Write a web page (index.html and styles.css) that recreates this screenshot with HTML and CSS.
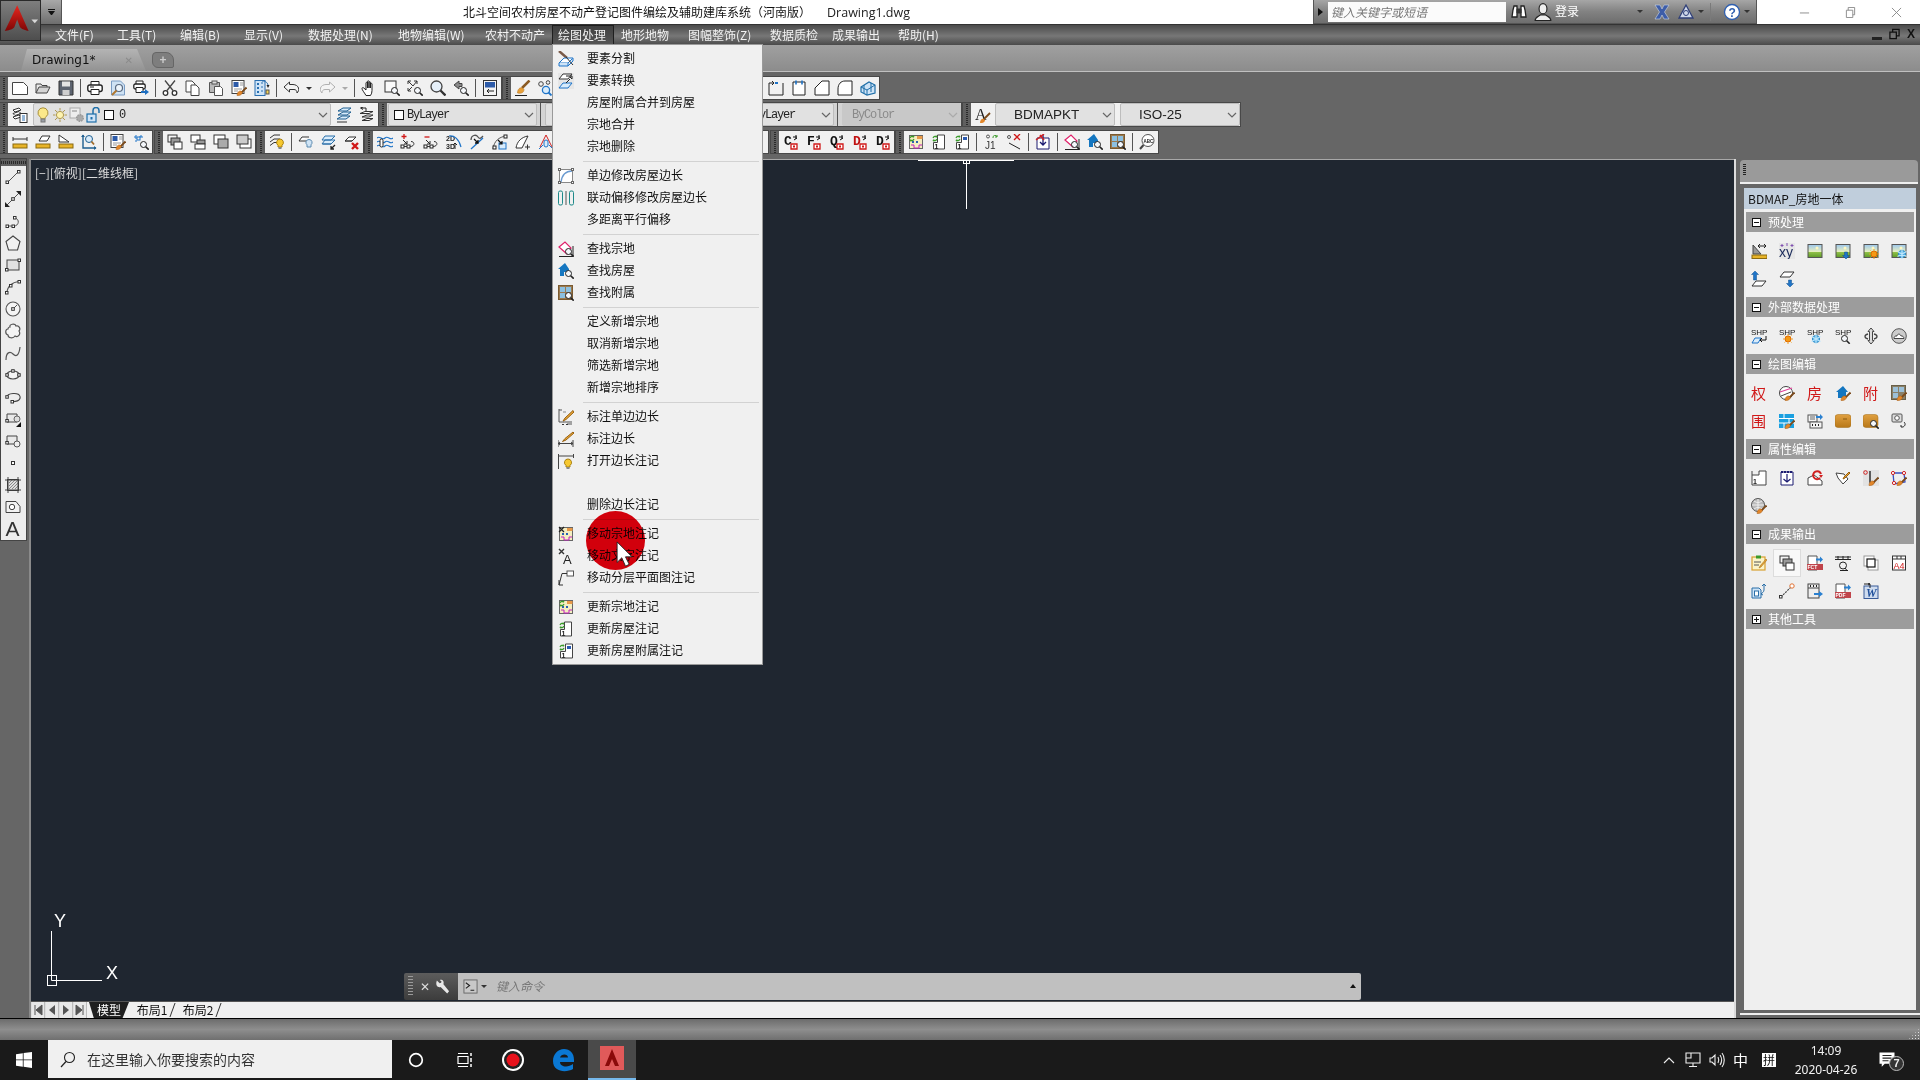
FILE: index.html
```html
<!DOCTYPE html>
<html lang="zh">
<head>
<meta charset="utf-8">
<title>Drawing1.dwg</title>
<link rel="stylesheet" href="styles.css">
</head>
<body>
<svg class="defs" xmlns="http://www.w3.org/2000/svg">
<defs>
<linearGradient id="gRed" x1="0" y1="0" x2="0" y2="1"><stop offset="0" stop-color="#e8281f"/><stop offset="1" stop-color="#7d0606"/></linearGradient>
<linearGradient id="gSky" x1="0" y1="0" x2="0" y2="1"><stop offset="0" stop-color="#9cc7ee"/><stop offset=".55" stop-color="#e8efc0"/><stop offset=".6" stop-color="#8fc048"/><stop offset="1" stop-color="#5f9a28"/></linearGradient>
<linearGradient id="gWal" x1="0" y1="0" x2="0" y2="1"><stop offset="0" stop-color="#e0a040"/><stop offset="1" stop-color="#b87818"/></linearGradient>
<g id="mag"><circle cx="10.5" cy="10.5" r="3" fill="#f4f7fb" stroke="#222"/><path d="M12.7 12.7l3 3" stroke="#222" stroke-width="1.6"/></g>
<g id="brush"><path d="M15.5 7.5l-5 5" stroke="#7a4a1c" stroke-width="1.8"/><path d="M6 15.5c0-3 2-5 4-4.500l1.300 1.300c0 2-2 3.700-5.300 3.200z" fill="#e2862a" stroke="#a85f14" stroke-width=".5"/></g>
<g id="pic"><rect x="1" y="1.500" width="14" height="13" fill="url(#gSky)" stroke="#555"/><circle cx="10" cy="5" r="1.500" fill="#fff7c0" stroke="none"/></g>
<g id="sun"><circle cx="11" cy="11" r="3" fill="#f59a14" stroke="#e06a00"/><path d="M11 6v1.500M11 14.500V16M6 11h1.500M14.500 11H16M7.500 7.500l1 1M14.500 7.500l-1 1M7.500 14.500l1-1M14.500 14.500l-1-1" stroke="#f0a020"/></g>
<g id="snow"><circle cx="11" cy="11" r="3.600" fill="#58b4e8" stroke="#2f8cc8"/><path d="M11 6v10M6.500 8.500l9 5M15.500 8.500l-9 5" stroke="#bfe6fb" stroke-width="1.200"/></g>
<g id="darrow"><path d="M9.500 9h3v3.500h2L11 16l-3.500-3.500h2z" fill="#1f74c8" stroke="#10508f" stroke-width=".5"/></g>
<g id="rarrow"><path d="M9 3.500h4V1.500l3 3-3 3v-2H9z" fill="#2a80d0" stroke="none"/></g>
<g id="garrows"><path d="M2 4a2.500 2.500 0 0 1 4-1M6 5a2.500 2.500 0 0 1-4 1" stroke="#3a9a2a" stroke-width="1.200"/><path d="M5 1l1.500 2-2 .5zM3 8L1.500 6l2-.5z" fill="#3a9a2a" stroke="none"/></g>
<g id="map"><rect x="1.500" y="1.500" width="13" height="13" fill="#f5eec0" stroke="#666"/><path d="M9 2h5.500v3H9z" fill="#e89a4a" stroke="none"/><path d="M3 11h3v3h5v-3h3" stroke="#c020c0"/><rect x="4" y="7" width="2" height="2" fill="#2a60b0" stroke="none"/><rect x="8" y="7" width="2" height="2" fill="#2a60b0" stroke="none"/></g>

<symbol id="new" viewBox="0 0 16 16"><path d="M.5 2.500h11l4 4v8H.5z" fill="#fff" stroke="#444"/></symbol>
<symbol id="open" viewBox="0 0 16 16"><path d="M1 13V4h5l1 1.500h5V7" fill="#e8e8e8" stroke="#444"/><path d="M1 13l3-6h11l-3 6z" fill="#d4d4d4" stroke="#444"/></symbol>
<symbol id="save" viewBox="0 0 16 16"><path d="M1 1h14v14H1z" fill="#5d6470" stroke="#333"/><rect x="4" y="1.500" width="8" height="5" fill="#e4e4e4" stroke="none"/><rect x="4.500" y="10" width="7" height="5" fill="#cfcfcf" stroke="none"/></symbol>
<symbol id="print" viewBox="0 0 16 16"><path d="M4 5V1.500h8V5" fill="#fff" stroke="#222"/><rect x=".8" y="5" width="14.400" height="6.500" rx="2" fill="#fff" stroke="#222" stroke-width="1.400"/><path d="M4 9.500h8v5H4z" fill="#fff" stroke="#222"/><path d="M3 7h4" stroke="#222"/></symbol>
<symbol id="preview" viewBox="0 0 16 16"><path d="M1.500 1h9l4 4v10h-13z" fill="#cfe2f3" stroke="#7a9cc4"/><circle cx="9" cy="8" r="3.500" fill="#eef5fb" stroke="#5a6a80" stroke-width="1.200"/><path d="M6.500 10.500L2 15" stroke="#b07830" stroke-width="2"/></symbol>
<symbol id="plot" viewBox="0 0 16 16"><path d="M3 4V1h7v3" fill="#fff" stroke="#222"/><rect x=".8" y="4" width="11.400" height="5" rx="1.500" fill="#fff" stroke="#222" stroke-width="1.300"/><path d="M3 7.500h7v5H3z" fill="#fff" stroke="#222"/><path d="M8 11h4V9l4 3-4 3v-2H8z" fill="#1f6fc0" stroke="none"/></symbol>
<symbol id="cut" viewBox="0 0 16 16"><path d="M3 .5l8 10M13 .5l-8 10" stroke="#444" stroke-width="1.300"/><circle cx="3.500" cy="13" r="2.300" fill="#fff" stroke="#333" stroke-width="1.300"/><circle cx="12.500" cy="13" r="2.300" fill="#fff" stroke="#333" stroke-width="1.300"/></symbol>
<symbol id="copy" viewBox="0 0 16 16"><path d="M1 1h6l3 3v8H1z" fill="#fff" stroke="#444"/><path d="M6 5h5l3 3v7.500H6z" fill="#fff" stroke="#444"/></symbol>
<symbol id="paste" viewBox="0 0 16 16"><path d="M1.500 2.500h10v10h-10z" fill="#b8b8b8" stroke="#555"/><rect x="4" y="1" width="5" height="3" fill="#ddd" stroke="#555"/><path d="M6.500 6.500h6l2 2v7h-8z" fill="#fff" stroke="#555"/></symbol>
<symbol id="match" viewBox="0 0 16 16"><rect x="1" y=".5" width="12" height="13" fill="#fff" stroke="#444"/><rect x="2.500" y="2" width="5" height="5" fill="#2c5aa8" stroke="none"/><path d="M9 3h3M9 5h3M3 9h8M3 11h4" stroke="#999"/><use href="#brush"/></symbol>
<symbol id="props" viewBox="0 0 16 16"><rect x="1" y=".5" width="10" height="15" fill="#cfe4f7" stroke="#2a6fb0"/><path d="M3 3h2v2H3zM3 7h2v2H3zM3 11h2v2H3z" fill="#2a6fb0" stroke="none"/><path d="M7 3h2M7 7h2M7 11h2" stroke="#2a6fb0"/><path d="M8 1c4 0 6 2 6 5" stroke="#2a6fb0"/><path d="M12.500 5h3L14 8z" fill="#222" stroke="none"/><rect x="12" y="10" width="3" height="4" fill="#f3d050" stroke="#555"/></symbol>
<symbol id="undo" viewBox="0 0 16 16"><path d="M6.500 2L1 7l5.500 5V9.500H11a3 3 0 0 1 3 3.500c1.500-1.500 2-3 1.500-5S12.500 4.500 10 4.500H6.500z" fill="#f4f4f4" stroke="#333"/></symbol>
<symbol id="redo" viewBox="0 0 16 16"><path d="M9.500 2l5.500 5-5.500 5V9.500H5A3 3 0 0 0 2 13C.5 11.500 0 10 .5 8S3.500 4.500 6 4.500h3.500z" fill="#f4f4f4" stroke="#b0b0b0"/></symbol>
<symbol id="pan" viewBox="0 0 16 16"><path d="M5 15.500C3 12 1 10 1 8.500c0-1 1.200-1.200 2-.3L5 10V3c0-1 1.500-1 1.500 0v5-6.500c0-1 1.500-1 1.500 0V8 2.500c0-1 1.500-1 1.500 0V8 4c0-1 1.500-1 1.500 0v6.500c0 2-.5 3.500-1.500 5z" fill="#fff" stroke="#222"/></symbol>
<symbol id="zwin" viewBox="0 0 16 16"><rect x="1" y="1" width="11" height="11" fill="#fafafa" stroke="#333"/><use href="#mag"/></symbol>
<symbol id="zext" viewBox="0 0 16 16"><path d="M1 1l3 0M1 1v3M1 1l5 5M10 1h-3M10 1v3M10 1L6 6M1 11V8M1 11h3M1 11l4-4" stroke="#333"/><use href="#mag"/></symbol>
<symbol id="zrt" viewBox="0 0 16 16"><circle cx="6.500" cy="6.500" r="5.500" fill="#e6f0fa" stroke="#444" stroke-width="1.300"/><path d="M10.500 10.500l5 5" stroke="#333" stroke-width="2.300"/></symbol>
<symbol id="zprev" viewBox="0 0 16 16"><path d="M1 5l5-4v2.500h3v3H6V9z" fill="#8a8a8a" stroke="#444"/><use href="#mag"/></symbol>
<symbol id="palw" viewBox="0 0 16 16"><rect x="1.500" y=".5" width="13" height="15" fill="#f4f4f4" stroke="#333"/><rect x="3" y="2" width="10" height="5.500" fill="#2c5aa8" stroke="none"/><path d="M5 11h7M5 11l2-2M5 11l2 2" stroke="#222"/></symbol>
<symbol id="brl" viewBox="0 0 16 16"><path d="M14.500.5L7 8" stroke="#8a5a22" stroke-width="2.500"/><path d="M2.500 13c0-4 2.500-6 5-5l1.500 1.500c0 3-3 4.500-6.500 3.500z" fill="#e8a038" stroke="#b06a14" stroke-width=".5"/><path d="M0 15.500h12" stroke="#222"/></symbol>
<symbol id="cir" viewBox="0 0 16 16"><circle cx="3" cy="4" r="2.300" stroke="#444"/><circle cx="10" cy="2.500" r="1.800" stroke="#444"/><circle cx="8" cy="10" r="3.600" fill="#d9ecfb" stroke="#1f74c8" stroke-width="1.300"/><path d="M10.500 12.500l3 3" stroke="#1f74c8" stroke-width="1.800"/></symbol>
<symbol id="layer" viewBox="0 0 16 16"><path d="M1 3l6-2 2 2-6 2zM1 6.500l6-2 2 2-6 2zM1 10l6-2 2 2-6 2z" fill="#fff" stroke="#333"/><rect x="8" y="6.500" width="7" height="9" fill="#fff" stroke="#333"/><path d="M10 9h3M10 11h3M10 13h3" stroke="#2a6fb0"/></symbol>
<symbol id="bulb" viewBox="0 0 16 16"><path d="M8 .8a5 5 0 0 1 3 9c-.6.500-1 1-1 2H6c0-1-.4-1.500-1-2a5 5 0 0 1 3-9z" fill="#fbe88a" stroke="#a8903c"/><rect x="6" y="12" width="4" height="3" fill="#9aa0a8" stroke="#777"/></symbol>
<symbol id="sunl" viewBox="0 0 16 16"><circle cx="8" cy="8" r="3.600" fill="#fdf3b0" stroke="#b09a50"/><path d="M8 1v2.500M8 12.500V15M1 8h2.500M12.500 8H15M3 3l2 2M13 3l-2 2M3 13l2-2M13 13l-2-2" stroke="#b09a50"/></symbol>
<symbol id="gear" viewBox="0 0 16 16"><rect x="1" y="1" width="10" height="10" fill="#eee" stroke="#aaa"/><path d="M3 3h5v2H3z" fill="#bbb" stroke="none"/><circle cx="11" cy="11" r="3.300" fill="#aaa" stroke="#999" stroke-width="1.500" stroke-dasharray="1.500 1"/></symbol>
<symbol id="lock" viewBox="0 0 16 16"><rect x="1" y="7" width="9" height="8" fill="#cfe4f7" stroke="#1f6fa8" stroke-width="1.200"/><path d="M7 7V3.500a3 3 0 0 1 6 0V6" stroke="#1f6fa8" stroke-width="1.500"/><rect x="4.500" y="10" width="2" height="2.500" fill="#1f6fa8" stroke="none"/></symbol>
<symbol id="lstack" viewBox="0 0 16 16"><path d="M2 4l5-3h8l-4 3zM2 8l5-3h8l-4 3zM1 12l5-3h8l-4 3z" fill="#d9ecfb" stroke="#1f5f90"/><path d="M1 15h10" stroke="#333"/></symbol>
<symbol id="lprev" viewBox="0 0 16 16"><path d="M1 6.500l5-2h8l-4 2zM3 10l5-2h6l-4 2zM3 13.500l5-2h6l-4 2z" fill="#fff" stroke="#333"/><path d="M7 4V1H2M4 0L1.500 1 4 2.500" stroke="#222"/></symbol>
<symbol id="afont" viewBox="0 0 16 16"><text x="0" y="13" class="it it-a">A</text><path d="M15 6l-6 6" stroke="#7a4a1c" stroke-width="1.800"/><path d="M5 16c0-3 2-5 4-4l1 1c0 2-2 3.500-5 3z" fill="#e2862a" stroke="none"/></symbol>
<symbol id="d1" viewBox="0 0 16 16"><path d="M1 5h14M1 3v4M15 3v4" stroke="#333"/><rect x="1" y="10" width="14" height="4" fill="#e8b428" stroke="#8a6a10"/></symbol>
<symbol id="d2" viewBox="0 0 16 16"><path d="M4 7l3-5h8l-3 5z" fill="#fff" stroke="#333"/><rect x="1" y="10" width="14" height="4" fill="#e8b428" stroke="#8a6a10"/></symbol>
<symbol id="d3" viewBox="0 0 16 16"><path d="M1 8V1l10 7z" fill="#fff" stroke="#333"/><rect x="1" y="10" width="14" height="4" fill="#e8b428" stroke="#8a6a10"/></symbol>
<symbol id="ucsm" viewBox="0 0 16 16"><path d="M2 1v13h13" stroke="#1f5f90" stroke-width="1.400"/><path d="M0 3l2-2.500L4 3zM13 12l2.500 2-2.500 2z" fill="#1f5f90" stroke="none"/><circle cx="8" cy="5" r="3.500" fill="#d9ecfb" stroke="#1f5f90"/><path d="M10.500 7.500l2.500 3" stroke="#a06a28" stroke-width="1.800"/></symbol>
<symbol id="zobj" viewBox="0 0 16 16"><path d="M1 3h2M3 1v4M8 1v2M6 3h4M3 8V6" stroke="#1f74c8"/><rect x="4" y="3" width="3" height="3" fill="#eee" stroke="#1f74c8"/><use href="#mag"/></symbol>
<symbol id="ord1" viewBox="0 0 16 16"><rect x="1" y="1" width="9" height="7" fill="#f4f4f4" stroke="#333"/><rect x="4" y="4" width="9" height="7" fill="#999" stroke="#333"/><rect x="7" y="8" width="8" height="7" fill="#fff" stroke="#333"/></symbol>
<symbol id="ord2" viewBox="0 0 16 16"><rect x="1" y="1" width="9" height="7" fill="#fff" stroke="#333"/><rect x="7" y="6" width="8" height="4" fill="#999" stroke="#333"/><rect x="5" y="10" width="10" height="5" fill="#fff" stroke="#333"/></symbol>
<symbol id="ord3" viewBox="0 0 16 16"><rect x="1" y="1" width="11" height="9" fill="#fff" stroke="#333"/><rect x="5" y="5" width="10" height="9" fill="#aaa" stroke="#333"/></symbol>
<symbol id="ord4" viewBox="0 0 16 16"><rect x="4" y="5" width="11" height="9" fill="#fff" stroke="#333"/><rect x="1" y="1" width="11" height="9" fill="#ccc" stroke="#333"/></symbol>
<symbol id="lbulb" viewBox="0 0 16 16"><path d="M1 4l4-3h6M1 8l4-3h6M1 11.500l4-3h4" stroke="#333"/><path d="M11 5a3.500 3.500 0 0 1 2 6.300V13h-4v-1.700A3.500 3.500 0 0 1 11 5z" fill="#f6c830" stroke="#a88010"/><rect x="9.500" y="13" width="3" height="2" fill="#888" stroke="none"/></symbol>
<symbol id="loff" viewBox="0 0 16 16"><path d="M1 7l3-4h7" fill="#fff" stroke="#333"/><path d="M1 7h8" stroke="#333"/><path d="M11 5.500a3 3 0 0 1 2 5.300V13h-4v-2.200a3 3 0 0 1 2-5.300z" fill="#d0e4f5" stroke="#5a8ab0"/></symbol>
<symbol id="lmove" viewBox="0 0 16 16"><path d="M4 2l10 0-4 4H1zM4 6l10 0-4 4H1z" fill="#d9ecfb" stroke="#2a6fa8"/><path d="M2 10h8" stroke="#2a6fa8"/><path d="M14 11l-4 4M10 12v3h3" stroke="#222" stroke-width="1.300"/></symbol>
<symbol id="ldel" viewBox="0 0 16 16"><path d="M1 7l4-4h7l-4 4zM1 7h7" fill="#fff" stroke="#333"/><path d="M8 9l6 6M14 9l-6 6" stroke="#d01818" stroke-width="2.400"/></symbol>
<symbol id="wav" viewBox="0 0 16 16"><path d="M0 4c3-3 5 3 8 0s5 3 8 0M0 8c3-3 5 3 8 0s5 3 8 0M0 12c3-3 5 3 8 0s5 3 8 0" stroke="#1f74c8" stroke-width="1.200"/><rect x="3" y="5" width="3" height="8" rx="1.500" fill="#fff" stroke="#222"/></symbol>
<symbol id="vadd" viewBox="0 0 16 16"><path d="M4 0v5M1.500 2.500h5" stroke="#d01818" stroke-width="1.300"/><rect x="1" y="11" width="3" height="3" fill="#fff" stroke="#222"/><rect x="7" y="11" width="3" height="3" fill="#fff" stroke="#222"/><path d="M4 12.500h3M10 12.500c5 0 5-5 1-5" stroke="#333"/><path d="M3 6l4 4M7 7v3H4" stroke="#222"/></symbol>
<symbol id="vdel" viewBox="0 0 16 16"><path d="M1.500 3h5" stroke="#d01818" stroke-width="1.300"/><rect x="1" y="11" width="3" height="3" fill="#fff" stroke="#222"/><rect x="7" y="11" width="3" height="3" fill="#fff" stroke="#222"/><path d="M4 12.500h3M10 12.500c5 0 5-5 1-5" stroke="#333"/><path d="M3 6l4 4M7 7v3H4" stroke="#222"/></symbol>
<symbol id="d23" viewBox="0 0 16 16"><text x="0" y="7" class="it">2D</text><text x="0" y="15" class="it">3D</text><path d="M3 2c5-1 10 3 12 11" stroke="#1f74c8" stroke-width="1.200"/><path d="M9 15v-5M7 11l2-2 2 2" stroke="#222"/></symbol>
<symbol id="vedit" viewBox="0 0 16 16"><path d="M2 6c0-5 5-6 7-3s4 0 5-1" stroke="#555" stroke-width="1.300"/><path d="M2 15L14 4" stroke="#1f74c8" stroke-width="1.300"/><path d="M5 5l4 4M9 6v3H6" stroke="#111" stroke-width="1.300"/></symbol>
<symbol id="vadj" viewBox="0 0 16 16"><path d="M1 15C2 7 7 3 14 2" stroke="#555"/><rect x="12" y="1" width="3" height="3" fill="#fff" stroke="#222"/><rect x="1" y="12" width="3" height="3" fill="#fff" stroke="#222"/><rect x="7" y="9" width="7" height="6" fill="#d9ecfb" stroke="#1f74c8"/><path d="M6 6l4 4M10 7v3H7" stroke="#111" stroke-width="1.200"/></symbol>
<symbol id="varc" viewBox="0 0 16 16"><path d="M1 14C2 7 7 3 13 2l-6 12z" fill="#fff" stroke="#333"/><path d="M10 13h5M12.500 10.500v5" stroke="#333"/></symbol>
<symbol id="com" viewBox="0 0 16 16"><path d="M8 1L2 13M8 1l6 12" stroke="#d02020"/><rect x="6" y="6" width="4" height="7" rx="2" fill="#d9ecfb" stroke="#1f74c8"/><path d="M1 15l4-4M15 15l-4-4" stroke="#1f74c8"/></symbol>
<symbol id="cd" viewBox="0 0 16 16"><path d="M8 10h6v5H8z" fill="#fff" stroke="#d01818" stroke-width="1.300"/><rect x="10" y="11.500" width="2" height="2" fill="#d01818" stroke="none"/><path d="M10 3h4M13 1v4" stroke="#111"/><path d="M11 6l3-2" stroke="#111"/></symbol>
<symbol id="tC" viewBox="0 0 16 16"><text x="1" y="11" class="it it-b">C</text><use href="#cd"/></symbol>
<symbol id="tF" viewBox="0 0 16 16"><text x="1" y="11" class="it it-b">F</text><use href="#cd"/></symbol>
<symbol id="tQ" viewBox="0 0 16 16"><text x="1" y="11" class="it it-b">Q</text><use href="#cd"/></symbol>
<symbol id="tD" viewBox="0 0 16 16"><text x="1" y="11" class="it it-b it-r">D</text><use href="#cd"/></symbol>
<symbol id="tD2" viewBox="0 0 16 16"><text x="1" y="11" class="it it-b">D</text><use href="#cd"/></symbol>
<symbol id="n1" viewBox="0 0 16 16"><use href="#map"/><use href="#garrows"/></symbol>
<symbol id="n2" viewBox="0 0 16 16"><path d="M2.500 8.500h4V1h7v14h-11z" fill="#fff" stroke="#444"/><text x="3.500" y="14.500" class="it">1</text><use href="#garrows"/></symbol>
<symbol id="n3" viewBox="0 0 16 16"><path d="M2.500 8.500h5V1h7v14h-12z" fill="#fff" stroke="#444"/><rect x="9" y="3" width="4" height="3" fill="#2a5ab0" stroke="none"/><text x="3.500" y="14.500" class="it">1</text><use href="#garrows"/></symbol>
<symbol id="j1" viewBox="0 0 16 16"><circle cx="5" cy="2.500" r="1.500" stroke="#555"/><path d="M10 4a2 2 0 0 1 4-1M14 1v2h-2" stroke="#3a9a2a"/><text x="2" y="15" class="it it-c">J1</text></symbol>
<symbol id="xl" viewBox="0 0 16 16"><circle cx="3" cy="3" r="1.500" stroke="#555"/><path d="M8 0l6 6M14 0L8 6" stroke="#d01818" stroke-width="1.300"/><path d="M3 9l11 6" stroke="#222"/></symbol>
<symbol id="insr" viewBox="0 0 16 16"><path d="M2 4h12v11H2z" fill="#fff" stroke="#1a1a70"/><path d="M8 1v10M5 8l3 3 3-3" stroke="#1a1a70" stroke-width="1.300"/><path d="M1 6L9 0M9 6L5 1" stroke="#d02020" stroke-width="1.500"/></symbol>
<symbol id="fz" viewBox="0 0 16 16"><path d="M1 6l6-5 6 6-4 6z" fill="#fff" stroke="#e0206a" stroke-width="1.200"/><path d="M1 15.500h14M15 5v10" stroke="#222"/><use href="#mag"/></symbol>
<symbol id="fh" viewBox="0 0 16 16"><path d="M7 0L0 6h2v7h4V9h3l2-1V6z" fill="#1476c0" stroke="none"/><use href="#mag"/></symbol>
<symbol id="ff" viewBox="0 0 16 16"><rect x=".5" y=".5" width="14" height="14" fill="#9a7a50" stroke="#7a5a30"/><path d="M2 2h5v5H2zM8 2h5v5H8zM2 8h5v5H2z" fill="#8cc0e0" stroke="none"/><use href="#mag"/></symbol>
<symbol id="abc" viewBox="0 0 16 16"><circle cx="9" cy="6.500" r="6" fill="#fff" stroke="#555"/><text x="4.500" y="8.500" class="it it-s">ABC</text><path d="M4.500 11L1 15" stroke="#444" stroke-width="2"/></symbol>
<symbol id="r1" viewBox="0 0 16 16"><path d="M1 3v12h14V3" stroke="#222"/><path d="M1 3h5M4 1l2 2-2 2" stroke="#222"/><rect x="7" y="2" width="3" height="2" fill="#1f74c8" stroke="none"/></symbol>
<symbol id="r2" viewBox="0 0 16 16"><path d="M2 2h12v13H2z" fill="#fff" stroke="#222"/><path d="M5 .5v4M11 .5v4" stroke="#1f74c8" stroke-width="1.600"/></symbol>
<symbol id="r3" viewBox="0 0 16 16"><path d="M1 15V8l7-7h7v14z" fill="#fff" stroke="#222"/></symbol>
<symbol id="r4" viewBox="0 0 16 16"><path d="M1 15V9c0-5 3-8 7-8h7v14z" fill="#fff" stroke="#222"/></symbol>
<symbol id="r5" viewBox="0 0 16 16"><path d="M1 7l8-5 6 3v8l-8 2-6-3z" fill="#cfe4f7" stroke="#1f6fa8" stroke-width="1.200"/><path d="M1 7l6 3v5M7 10l8-5M4 5v8M11 3v9" stroke="#1f6fa8"/></symbol>

<symbol id="m1" viewBox="0 0 16 16"><path d="M1 0l8 7" stroke="#7a5a48" stroke-width="2.400"/><path d="M1 12l5-5h9l-5 5z" fill="#fff" stroke="#1f74c8"/><path d="M1 12v3h9v-3M10 15l5-5V7" fill="#cfe4f7" stroke="#1f74c8"/><path d="M8 6l7 8" stroke="#333"/></symbol>
<symbol id="m2" viewBox="0 0 16 16"><rect width="16" height="16" fill="#e6e6e6" stroke="none"/><path d="M1 6l4-5h9l-4 5z" fill="#fff" stroke="#333"/><path d="M1 15l4-5h9l-4 5z" fill="#d9ecfb" stroke="#1f74c8"/><path d="M8 3h6v3M14 6l-2-2M8 10l4-4" stroke="#222"/></symbol>
<symbol id="m3" viewBox="0 0 16 16"><rect x="1.500" y="1.500" width="13" height="13" fill="#fff" stroke="#888"/><path d="M14 3c-7 0-10 4-11 11" stroke="#6a9ad0" stroke-width="1.400"/><rect x=".5" y=".5" width="2" height="2" fill="#fff" stroke="#666"/><rect x="13.500" y=".5" width="2" height="2" fill="#fff" stroke="#666"/><rect x=".5" y="13.500" width="2" height="2" fill="#fff" stroke="#666"/><rect x="13.500" y="13.500" width="2" height="2" fill="#fff" stroke="#666"/></symbol>
<symbol id="m4" viewBox="0 0 16 16"><rect x=".5" y="1" width="4" height="14" rx="1.500" stroke="#1f8a8a"/><rect x="11.500" y="1" width="4" height="14" rx="1.500" stroke="#1f8a8a"/><path d="M8 1v14" stroke="#555"/></symbol>
<symbol id="m8" viewBox="0 0 16 16"><path d="M1 0v13h13M1 1h3M9 15h5" stroke="#555"/><path d="M5 3h3M5 13h1" stroke="#888"/><path d="M15 1.500L7 9l-2 3 3-1.500 8-7.500z" fill="#e8a838" stroke="#996010"/><path d="M4 15.500h2M8 15.500h2" stroke="#333"/></symbol>
<symbol id="m9" viewBox="0 0 16 16"><path d="M0 9v7M15 9v7M0 12.500h15" stroke="#444"/><path d="M15 1L7 7.500l-2.500 3 3.500-1.500 8-7z" fill="#e8a838" stroke="#996010"/><path d="M2 11l-2 1.500L2 14M13 11l2 1.500L13 14" stroke="#444"/></symbol>
<symbol id="m10" viewBox="0 0 16 16"><path d="M.5 1v15M15.500 1v4M.5 3h15" stroke="#444"/><path d="M10 6a3.500 3.500 0 0 1 2 6.400V14H8v-1.600A3.500 3.500 0 0 1 10 6z" fill="#f6c830" stroke="#a88010"/><rect x="8.500" y="14" width="3" height="2" fill="#888" stroke="none"/></symbol>
<symbol id="m11" viewBox="0 0 16 16"><use href="#map"/><path d="M1 1l5 5M6 1L1 6" stroke="#222" stroke-width="1.200"/></symbol>
<symbol id="m12" viewBox="0 0 16 16"><path d="M1 1l5 5M6 1L1 6" stroke="#333" stroke-width="1.400"/><text x="5" y="16" class="it it-l">A</text></symbol>
<symbol id="m13" viewBox="0 0 16 16"><rect x="9" y="1" width="6.500" height="5" fill="#fff" stroke="#555"/><path d="M9 3.500H4L1 15" stroke="#333"/><path d="M1 10v5h4" stroke="#333"/></symbol>

<symbol id="l1" viewBox="0 0 16 16"><path d="M3 13L13 3" stroke="#555"/><rect class="h" x="1" y="12" width="2.500" height="2.500"/><rect class="h" x="12.500" y="1.500" width="2.500" height="2.500"/></symbol>
<symbol id="l2" viewBox="0 0 16 16"><path d="M2 14L14 2" stroke="#555"/><path d="M0 16v-5l5 5zM16 0v5l-5-5z" fill="#222" stroke="none"/><rect class="h" x="6.700" y="6.700" width="2.600" height="2.600"/></symbol>
<symbol id="l3" viewBox="0 0 16 16"><path d="M2 13h7c5 0 6-7 1-8" stroke="#555"/><rect class="h" x="1" y="12" width="2.500" height="2.500"/><rect class="h" x="7" y="12" width="2.500" height="2.500"/><rect class="h" x="8.500" y="3.500" width="2.500" height="2.500"/></symbol>
<symbol id="l4" viewBox="0 0 16 16"><path d="M8 1l7 5.500L12.500 15h-9L1 6.500z" fill="#f2f2f2" stroke="#444" stroke-width="1.100"/></symbol>
<symbol id="l5" viewBox="0 0 16 16"><rect x="2" y="3" width="12" height="10" fill="#e2e2e2" stroke="#444"/><rect class="h" x=".5" y="11.500" width="2.500" height="2.500"/><rect class="h" x="13" y="2" width="2.500" height="2.500"/></symbol>
<symbol id="l6" viewBox="0 0 16 16"><path d="M2 14C2 8 7 3 14 2.500" stroke="#555" stroke-width="1.200"/><rect class="h" x=".5" y="12.500" width="2.500" height="2.500"/><rect class="h" x="4.500" y="5.500" width="2.500" height="2.500"/><rect class="h" x="13" y="1.500" width="2.500" height="2.500"/></symbol>
<symbol id="l7" viewBox="0 0 16 16"><circle cx="8" cy="8" r="7" fill="#f4f4f4" stroke="#555" stroke-width="1.100"/><path d="M8 8l4-4" stroke="#555"/><rect class="h" x="6.700" y="6.700" width="2.600" height="2.600"/></symbol>
<symbol id="l8" viewBox="0 0 16 16"><path d="M5 4c-1-3 5-4 6-1 3-1 5 3 3 5 2 3-1 7-4 5-2 3-7 2-7-1-3-1-3-6 0-6 0-1 1-2 2-2z" fill="#f4f4f4" stroke="#555" stroke-width="1.200"/></symbol>
<symbol id="l9" viewBox="0 0 16 16"><path d="M1 15C1 7 5 6 8 9s6 2 7-7" stroke="#555" stroke-width="1.200"/></symbol>
<symbol id="l10" viewBox="0 0 16 16"><ellipse cx="8" cy="8" rx="6.500" ry="4" fill="#f4f4f4" stroke="#444" stroke-width="1.100"/><rect class="h" x=".8" y="6.700" width="2.500" height="2.500"/><rect class="h" x="12.700" y="6.700" width="2.500" height="2.500"/><rect class="h" x="6.700" y="2.700" width="2.500" height="2.500"/></symbol>
<symbol id="l11" viewBox="0 0 16 16"><path d="M2 8c0-4 12-5 13-.5S10 13 6 12.500" stroke="#444" stroke-width="1.100"/><rect class="h" x=".8" y="6.700" width="2.500" height="2.500"/><rect class="h" x="6" y="11.500" width="2.500" height="2.500"/></symbol>
<symbol id="l12" viewBox="0 0 16 16"><path d="M2 3h10v8H2z" fill="#e8e8e8" stroke="#444"/><circle cx="12" cy="8" r="3" fill="#ddd" stroke="#666"/><rect class="h" x=".8" y="8.500" width="2.500" height="2.500"/><path d="M16 11v5h-5z" fill="#111" stroke="none"/></symbol>
<symbol id="l13" viewBox="0 0 16 16"><path d="M2 3h10v8H2z" fill="#e8e8e8" stroke="#444"/><circle cx="12" cy="11" r="3" fill="#eee" stroke="#555"/><rect class="h" x=".8" y="8.500" width="2.500" height="2.500"/></symbol>
<symbol id="l14" viewBox="0 0 16 16"><rect x="6.500" y="6.500" width="3" height="3" fill="#fff" stroke="#333"/></symbol>
<symbol id="l15" viewBox="0 0 16 16"><rect x="2.500" y="2.500" width="11" height="11" fill="#ddd" stroke="#333"/><path d="M4 6l3-3M4 9l6-6M4 12l9-9M7 12l6-6M10 12l3-3" stroke="#888"/><path d="M0 3h16M0 13h16M3 0v16M13 0v16" stroke="#444"/></symbol>
<symbol id="l16" viewBox="0 0 16 16"><path d="M1 2.500h10l4 5v6H1z" fill="#f2f2f2" stroke="#444"/><circle cx="7" cy="8" r="2.700" fill="#fff" stroke="#444"/></symbol>

<symbol id="p1" viewBox="0 0 16 16"><path d="M2 11V2l8 9z" fill="#999" stroke="#444"/><path d="M7 3h8M7 3l2-2M7 3l2 2M15 3l-2-2M15 3l-2 2" stroke="#222"/><rect x="1" y="12" width="15" height="3.500" fill="#e8b428" stroke="#8a6a10"/></symbol>
<symbol id="p2" viewBox="0 0 16 16"><rect width="16" height="16" fill="#e6e6e6" stroke="none"/><text x="0" y="14" class="it it-xy">xy</text><path d="M3 1v3M1.500 2.500h3M8 0v3M13 1v3M11.500 2.500h3" stroke="#8050b0"/></symbol>
<symbol id="p3" viewBox="0 0 16 16"><use href="#pic"/></symbol>
<symbol id="p4" viewBox="0 0 16 16"><use href="#pic"/><use href="#darrow"/></symbol>
<symbol id="p5" viewBox="0 0 16 16"><use href="#pic"/><use href="#sun"/></symbol>
<symbol id="p6" viewBox="0 0 16 16"><use href="#pic"/><use href="#snow"/></symbol>
<symbol id="p7" viewBox="0 0 16 16"><path d="M4 0l3.500 3.500h-2V9h-3V3.500h-2z" fill="#1f74c8" stroke="#10508f" stroke-width=".5"/><path d="M1 15l4-5h10l-4 5z" fill="#fff" stroke="#333"/></symbol>
<symbol id="p8" viewBox="0 0 16 16"><path d="M1 6l4-5h10l-4 5z" fill="#fff" stroke="#333"/><use href="#darrow"/></symbol>
<symbol id="s1" viewBox="0 0 16 16"><text x="0" y="7" class="it it-shp">SHP</text><path d="M1 15l3-5h6l-3 5z" fill="#d9ecfb" stroke="#1f74c8"/><path d="M15 8v4H9M11 10l-2 2 2 2" stroke="#111"/></symbol>
<symbol id="s2" viewBox="0 0 16 16"><text x="0" y="7" class="it it-shp">SHP</text><use href="#sun" transform="translate(-2 0)"/></symbol>
<symbol id="s3" viewBox="0 0 16 16"><text x="0" y="7" class="it it-shp">SHP</text><use href="#snow" transform="translate(-2 0)"/></symbol>
<symbol id="s4" viewBox="0 0 16 16"><text x="0" y="7" class="it it-shp">SHP</text><use href="#mag" transform="translate(-1 0)"/></symbol>
<symbol id="e5" viewBox="0 0 16 16"><path d="M8 0l3 3.500H9.500v9H11L8 16l-3-3.500h1.500v-9H5z" fill="#ddd" stroke="#444"/><path d="M5 6C1 7 1 10 5 11M11 6c4 1 4 4 0 5" stroke="#444" stroke-width="1.300"/></symbol>
<symbol id="e6" viewBox="0 0 16 16"><circle cx="8" cy="8" r="7.300" fill="#ccc" stroke="#555"/><path d="M3 10.500h10c0-2-2-3-3-2.500-1-3-4-2-4 0-2-.5-3 1-3 2.500z" fill="#fff" stroke="#444"/></symbol>
<symbol id="tq" viewBox="0 0 16 16"><text x="0" y="14" class="it it-red">权</text></symbol>
<symbol id="d22" viewBox="0 0 16 16"><circle cx="7" cy="8" r="6.500" fill="#fff" stroke="#444"/><path d="M1 7l12-4" stroke="#e0409a" stroke-width="1.300"/><path d="M2 11l10-4" stroke="#444"/><use href="#brush"/></symbol>
<symbol id="tf" viewBox="0 0 16 16"><text x="0" y="14" class="it it-red">房</text></symbol>
<symbol id="d24" viewBox="0 0 16 16"><path d="M8 1L1 7h2v6h8V7h2z" fill="#1476c0" stroke="none"/><use href="#brush"/></symbol>
<symbol id="tp" viewBox="0 0 16 16"><text x="0" y="14" class="it it-red">附</text></symbol>
<symbol id="d26" viewBox="0 0 16 16"><rect x=".5" y=".5" width="14" height="14" fill="#8a8068" stroke="#6a6048"/><path d="M2 2h5v5H2zM8 2h5v5H8zM2 8h5v5H2z" fill="#9cc0d8" stroke="none"/><use href="#brush"/></symbol>
<symbol id="tw" viewBox="0 0 16 16"><text x="0" y="14" class="it it-red">围</text></symbol>
<symbol id="d28" viewBox="0 0 16 16"><rect y="1" width="15" height="14" fill="#1aa0e0" stroke="none"/><path d="M0 5.500h15M0 10h15M5 1v4.500M10 5.500V10M5 10v5" stroke="#fff"/><use href="#brush"/></symbol>
<symbol id="d29" viewBox="0 0 16 16"><rect x="1" y="2" width="9" height="7" fill="#f4f4f4" stroke="#555"/><path d="M3 4h5M3 6h5" stroke="#666"/><rect x="3" y="9" width="12" height="6" fill="#f4f4f4" stroke="#555"/><path d="M5 12h1M8 12h1M11 12h1" stroke="#222" stroke-width="2"/><path d="M9 3h4V1l3 3-3 3V5H9z" fill="#2a80d0" stroke="none"/></symbol>
<symbol id="d30" viewBox="0 0 16 16"><rect y="1.500" width="16" height="13" rx="3" fill="url(#gWal)" stroke="#a06a14" stroke-width=".5"/><path d="M8 6h4" stroke="#8a5a10"/></symbol>
<symbol id="d31" viewBox="0 0 16 16"><rect y="1.500" width="15" height="13" rx="3" fill="url(#gWal)" stroke="#a06a14" stroke-width=".5"/><use href="#mag"/></symbol>
<symbol id="d32" viewBox="0 0 16 16"><rect x="1" y="1" width="10" height="8" rx="1" fill="#ddd" stroke="#555"/><circle cx="6" cy="5" r="2.300" fill="#fff" stroke="#555"/><path d="M13 9c2 2 1 4-1 5M10 12v2h2" stroke="#222"/></symbol>
<symbol id="a1" viewBox="0 0 16 16"><path d="M1 5h7V1h7v14H1z" fill="#fff" stroke="#444"/><path d="M1 1v4" stroke="#444"/><text x="2" y="14" class="it">1</text></symbol>
<symbol id="a2" viewBox="0 0 16 16"><path d="M2 2h12v13H2z" fill="#fff" stroke="#1a1a70"/><path d="M2 2h12" stroke="#1a1a70" stroke-dasharray="2 1" stroke-width="2"/><path d="M8 4v8M4.500 9L8 12l3.500-3" stroke="#1a1a70" stroke-width="1.200"/></symbol>
<symbol id="a3" viewBox="0 0 16 16"><path d="M1 15V8l6-3 8 6v4z" fill="#fff" stroke="#444"/><path d="M14 4a4 4 0 1 0-1 4" stroke="#d02020" stroke-width="2"/><path d="M16 5l-4 0 2 3z" fill="#d02020" stroke="none"/></symbol>
<symbol id="a4" viewBox="0 0 16 16"><path d="M1 3l8 1 4 5-5 5-5-6z" fill="#fff" stroke="#444"/><path d="M14 2l-5 5-1 2 2-1 5-5z" fill="#e8a838" stroke="#996010"/></symbol>
<symbol id="a5" viewBox="0 0 16 16"><rect width="16" height="16" fill="#e2e2e2" stroke="none"/><circle cx="2.500" cy="2.500" r="1.800" stroke="#d02020"/><path d="M7 1v11c0 2 3 3 4 0" stroke="#222" stroke-width="1.400"/><use href="#brush"/></symbol>
<symbol id="a6" viewBox="0 0 16 16"><path d="M2 3h11l1 9-11 2z" stroke="#3a50c0" stroke-width="1.300"/><circle cx="2" cy="3" r="1.600" fill="#fff" stroke="#d02020"/><circle cx="13" cy="3" r="1.600" fill="#fff" stroke="#d02020"/><circle cx="3" cy="13" r="1.600" fill="#fff" stroke="#d02020"/><use href="#brush"/></symbol>
<symbol id="a7" viewBox="0 0 16 16"><circle cx="7" cy="7" r="6.500" fill="#bbb" stroke="#555"/><path d="M1 7h12M7 1v12M3 3c3 2 5 2 8 0M3 11c3-2 5-2 8 0" stroke="#eee"/><use href="#brush"/></symbol>
<symbol id="o1" viewBox="0 0 16 16"><rect x="1" y="2" width="13" height="13" fill="#fbf3c8" stroke="#d8a030" stroke-width="1.200"/><rect x="5" y="0.500" width="5" height="3" fill="#3a9a2a" stroke="none"/><path d="M3 7h7M3 10h5" stroke="#555"/><path d="M15 4l-6 7-1 2 2-1 6-7z" fill="#e8a838" stroke="#996010" stroke-width=".5"/></symbol>
<symbol id="o3" viewBox="0 0 16 16"><path d="M1 1h9v14H1z" fill="#fff" stroke="#555"/><rect y="9" width="16" height="6" fill="#c0444a" stroke="none"/><text x=".5" y="14.300" class="it it-w">FCT</text><use href="#rarrow"/></symbol>
<symbol id="o4" viewBox="0 0 16 16"><path d="M0 2h16M0 4.500h16M3 1v4M8 1v4M13 1v4" stroke="#222"/><circle cx="8" cy="10.500" r="3.500" stroke="#222"/><path d="M10 13l2 2.500M5 15.500h8" stroke="#222"/></symbol>
<symbol id="o5" viewBox="0 0 16 16"><rect x="1" y="1" width="10" height="10" fill="#fff" stroke="#999"/><rect x="5" y="5" width="10" height="10" fill="#fff" stroke="#999"/><rect x="4" y="4" width="8" height="8" fill="#fff" stroke="#111" stroke-width="1.200"/></symbol>
<symbol id="o6" viewBox="0 0 16 16"><rect x="1.500" y="1" width="13" height="14" fill="#fff" stroke="#333"/><path d="M1.500 4h13M6 1v3M10 1v3" stroke="#333"/><text x="2.500" y="13.500" class="it it-a4">A4</text></symbol>
<symbol id="o7" viewBox="0 0 16 16"><path d="M1 5h7l2 2v8H1z" fill="#cfe4f7" stroke="#2a6fa8"/><rect x="3.500" y="8" width="4" height="5" fill="#fff" stroke="#2a6fa8"/><path d="M13 1v6c0 2-2 3-3 4M11 10l-1 1 2 1M13 1l-2 2M13 1l2 2" stroke="#2a6fa8"/></symbol>
<symbol id="o8" viewBox="0 0 16 16"><path d="M2 14L13 3" stroke="#444" stroke-width="1.100" stroke-dasharray="2 1"/><rect class="h" x=".5" y="12.500" width="2.500" height="2.500"/><circle cx="13" cy="3" r="2.200" fill="#fff" stroke="#e07030"/></symbol>
<symbol id="o9" viewBox="0 0 16 16"><rect x="1" y="1" width="11" height="14" fill="#eee" stroke="#444"/><path d="M1 5h11" stroke="#444"/><path d="M3 3h1M6 3h1M9 3h1" stroke="#222" stroke-width="2"/><path d="M7 10h5V8l4 3-4 3v-2H7z" fill="#2a80d0" stroke="none"/></symbol>
<symbol id="o10" viewBox="0 0 16 16"><path d="M1 1h9v14H1z" fill="#fff" stroke="#555"/><rect y="9" width="16" height="6" fill="#c0444a" stroke="none"/><text x=".5" y="14.300" class="it it-w">PDF</text><use href="#rarrow"/></symbol>
<symbol id="o11" viewBox="0 0 16 16"><rect x="1" y="3" width="14" height="12.500" fill="#cfdcef" stroke="#385a98"/><text x="3" y="14" class="it it-word">W</text><path d="M1 1h6M5 0l2 1-2 1M7 1v4" stroke="#222"/></symbol>
</defs>
</svg>

<div class="app">
  <header class="title">
    <div class="logo-slot"></div>
    <div class="qat"><span class="qat-glyph"></span></div>
    <div class="title-text">北斗空间农村房屋不动产登记图件编绘及辅助建库系统（河南版）</div>
    <div class="title-doc">Drawing1.dwg</div>
    <div class="info">
      <span class="tri-r"></span>
      <div class="info-input">键入关键字或短语</div>
      <svg class="ic ic-bin" viewBox="0 0 16 16"><path d="M2 6l1-4h3v11H1zM14 6l-1-4h-3v11h5z" fill="#fff" stroke="#222" stroke-width="1.300"/><path d="M6 5h4v4H6z" fill="#333"/></svg>
      <svg class="ic ic-user" viewBox="0 0 16 16"><ellipse cx="8" cy="5" rx="3.500" ry="4.500" fill="#eee" stroke="#222"/><path d="M1 15.500c0-3 3-3.500 5-5h4c2 1.500 5 2 5 5z" fill="#eee" stroke="#222"/></svg>
      <span class="info-login">登录</span>
      <span class="caret caret-login"></span>
      <svg class="ic ic-x" viewBox="0 0 16 16"><path d="M1 1h5l2 4 2-4h5l-4.500 7L15 15h-5l-2-4-2 4H1l4.500-7z" fill="#3d5da8" stroke="#cfd8ea" stroke-width=".6"/></svg>
      <svg class="ic ic-tri" viewBox="0 0 16 16"><path d="M8 1L1 14h14z" fill="#cfd8ea" stroke="#2f3f78" stroke-width="1.300"/><circle cx="8" cy="9" r="2.500" stroke="#2f3f78"/></svg>
      <span class="caret"></span>
      <span class="info-sep"></span>
      <svg class="ic ic-help" viewBox="0 0 16 16"><circle cx="8" cy="8" r="7.500" fill="#fff" stroke="#2f5fb0" stroke-width="1.300"/><text x="4.500" y="12.500" class="it it-q">?</text></svg>
      <span class="caret"></span>
    </div>
    <div class="winbtns">
      <span class="win"><svg class="ic-win" viewBox="0 0 12 12"><path d="M1 6.500h10"/></svg></span>
      <span class="win"><svg class="ic-win" viewBox="0 0 12 12"><path d="M1.500 3.500h7v8h-7zM3.500 3.500v-3h7v8h-2"/></svg></span>
      <span class="win"><svg class="ic-win" viewBox="0 0 12 12"><path d="M1 1l10 10M11 1L1 11"/></svg></span>
    </div>
  </header>

  <nav class="menubar">
    <span class="mb">文件(F)</span><span class="mb">工具(T)</span><span class="mb">编辑(B)</span><span class="mb">显示(V)</span><span class="mb">数据处理(N)</span><span class="mb">地物编辑(W)</span><span class="mb">农村不动产</span><span class="mb mb-on">绘图处理</span><span class="mb">地形地物</span><span class="mb">图幅整饰(Z)</span><span class="mb">数据质检</span><span class="mb">成果输出</span><span class="mb">帮助(H)</span>
    <div class="mdi">
      <span class="mdi-min"></span>
      <svg class="mdi-res" viewBox="0 0 12 12"><path d="M1 4h7v7H1zM4 4V1h7v7H8"/></svg>
      <span class="mdi-x">X</span>
    </div>
  </nav>

  <div class="tabbar">
    <div class="dtab"><span class="dtab-name">Drawing1*</span><span class="dtab-x">✕</span></div>
    <div class="dplus"><span>+</span></div>
  </div>

  <div class="toolbars">
    <div class="row row1">
      <div class="tb">
        <i class="grip"></i>
        <b class="bt"><svg class="ic"><use href="#new"/></svg></b><b class="bt"><svg class="ic"><use href="#open"/></svg></b><b class="bt"><svg class="ic"><use href="#save"/></svg></b><i class="vs"></i>
        <b class="bt"><svg class="ic"><use href="#print"/></svg></b><b class="bt"><svg class="ic"><use href="#preview"/></svg></b><b class="bt"><svg class="ic"><use href="#plot"/></svg></b><i class="vs"></i>
        <b class="bt"><svg class="ic"><use href="#cut"/></svg></b><b class="bt"><svg class="ic"><use href="#copy"/></svg></b><b class="bt"><svg class="ic"><use href="#paste"/></svg></b><b class="bt"><svg class="ic"><use href="#match"/></svg></b><b class="bt"><svg class="ic"><use href="#props"/></svg></b><i class="vs"></i>
        <b class="bt"><svg class="ic"><use href="#undo"/></svg></b><b class="bt-drop bt-d1"><span class="caret"></span></b><b class="bt"><svg class="ic"><use href="#redo"/></svg></b><b class="bt-drop bt-d2"><span class="caret caret-off"></span></b><i class="vs"></i>
        <b class="bt"><svg class="ic"><use href="#pan"/></svg></b><b class="bt"><svg class="ic"><use href="#zwin"/></svg></b><b class="bt"><svg class="ic"><use href="#zext"/></svg></b><b class="bt"><svg class="ic"><use href="#zrt"/></svg></b><b class="bt"><svg class="ic"><use href="#zprev"/></svg></b><i class="vs"></i>
        <b class="bt"><svg class="ic"><use href="#palw"/></svg></b>
      </div>
      <div class="tb tb-m2">
        <i class="grip"></i>
        <b class="bt"><svg class="ic"><use href="#brl"/></svg></b><b class="bt"><svg class="ic"><use href="#cir"/></svg></b>
        <i class="hid hid-r1"></i>
        <b class="bt"><svg class="ic"><use href="#r1"/></svg></b><b class="bt"><svg class="ic"><use href="#r2"/></svg></b><b class="bt"><svg class="ic"><use href="#r3"/></svg></b><b class="bt"><svg class="ic"><use href="#r4"/></svg></b><b class="bt"><svg class="ic"><use href="#r5"/></svg></b>
      </div>
    </div>

    <div class="row row2">
      <div class="tb">
        <i class="grip"></i>
        <b class="bt"><svg class="ic"><use href="#layer"/></svg></b>
        <div class="combo combo-layer">
          <svg class="ic ic-lb"><use href="#bulb"/></svg><svg class="ic ic-lb"><use href="#sunl"/></svg><svg class="ic ic-lb"><use href="#gear"/></svg><svg class="ic ic-lb"><use href="#lock"/></svg>
          <span class="swatch"></span><span class="combo-mono">0</span>
          <svg class="chev" viewBox="0 0 10 6"><path d="M1 1l4 4 4-4"/></svg>
        </div>
        <b class="bt"><svg class="ic"><use href="#lstack"/></svg></b><b class="bt"><svg class="ic"><use href="#lprev"/></svg></b>
      </div>
      <div class="tb tb-m1">
        <i class="grip"></i>
        <div class="combo combo-c1"><span class="swatch"></span><span class="combo-mono">ByLayer</span><svg class="chev" viewBox="0 0 10 6"><path d="M1 1l4 4 4-4"/></svg></div>
        <i class="cs"></i>
        <div class="combo combo-c2"><span class="combo-mono combo-right">ByLayer</span><svg class="chev chev-tight" viewBox="0 0 10 6"><path d="M1 1l4 4 4-4"/></svg></div>
        <i class="cs"></i>
        <div class="combo combo-c3"><span class="combo-mono">ByColor</span><svg class="chev" viewBox="0 0 10 6"><path d="M1 1l4 4 4-4"/></svg></div>
      </div>
      <div class="tb tb-m2">
        <i class="grip"></i>
        <b class="bt"><svg class="ic"><use href="#afont"/></svg></b>
        <div class="combo combo-c4"><span class="combo-sans combo-bd">BDMAPKT</span><svg class="chev" viewBox="0 0 10 6"><path d="M1 1l4 4 4-4"/></svg></div>
        <div class="combo combo-c5"><span class="combo-sans combo-iso">ISO-25</span><svg class="chev" viewBox="0 0 10 6"><path d="M1 1l4 4 4-4"/></svg></div>
      </div>
    </div>

    <div class="row row3">
      <div class="tb">
        <i class="grip"></i>
        <b class="bt"><svg class="ic"><use href="#d1"/></svg></b><b class="bt"><svg class="ic"><use href="#d2"/></svg></b><b class="bt"><svg class="ic"><use href="#d3"/></svg></b><b class="bt"><svg class="ic"><use href="#ucsm"/></svg></b><i class="vs"></i>
        <b class="bt"><svg class="ic"><use href="#match"/></svg></b><b class="bt"><svg class="ic"><use href="#zobj"/></svg></b>
      </div>
      <div class="tb tb-m3">
        <i class="grip"></i>
        <b class="bt"><svg class="ic"><use href="#ord1"/></svg></b><b class="bt"><svg class="ic"><use href="#ord2"/></svg></b><b class="bt"><svg class="ic"><use href="#ord3"/></svg></b><b class="bt"><svg class="ic"><use href="#ord4"/></svg></b>
      </div>
      <div class="tb tb-m2">
        <i class="grip"></i>
        <b class="bt"><svg class="ic"><use href="#lbulb"/></svg></b><i class="vs"></i><b class="bt"><svg class="ic"><use href="#loff"/></svg></b><b class="bt"><svg class="ic"><use href="#lmove"/></svg></b><b class="bt"><svg class="ic"><use href="#ldel"/></svg></b>
      </div>
      <div class="tb tb-m2">
        <i class="grip"></i>
        <b class="bt"><svg class="ic"><use href="#wav"/></svg></b><b class="bt"><svg class="ic"><use href="#vadd"/></svg></b><b class="bt"><svg class="ic"><use href="#vdel"/></svg></b><b class="bt"><svg class="ic"><use href="#d23"/></svg></b><b class="bt"><svg class="ic"><use href="#vedit"/></svg></b><b class="bt"><svg class="ic"><use href="#vadj"/></svg></b><b class="bt"><svg class="ic"><use href="#varc"/></svg></b><b class="bt"><svg class="ic"><use href="#com"/></svg></b>
        <i class="hid hid-r3"></i>
      </div>
      <div class="tb tb-m3">
        <i class="grip"></i>
        <b class="bt"><svg class="ic"><use href="#tC"/></svg></b><b class="bt"><svg class="ic"><use href="#tF"/></svg></b><b class="bt"><svg class="ic"><use href="#tQ"/></svg></b><b class="bt"><svg class="ic"><use href="#tD"/></svg></b><b class="bt"><svg class="ic"><use href="#tD2"/></svg></b>
      </div>
      <div class="tb tb-m2">
        <i class="grip"></i>
        <b class="bt"><svg class="ic"><use href="#n1"/></svg></b><b class="bt"><svg class="ic"><use href="#n2"/></svg></b><b class="bt"><svg class="ic"><use href="#n3"/></svg></b><i class="vs"></i>
        <b class="bt"><svg class="ic"><use href="#j1"/></svg></b><b class="bt"><svg class="ic"><use href="#xl"/></svg></b><i class="vs"></i>
        <b class="bt"><svg class="ic"><use href="#insr"/></svg></b><i class="vs"></i>
        <b class="bt"><svg class="ic"><use href="#fz"/></svg></b><b class="bt"><svg class="ic"><use href="#fh"/></svg></b><b class="bt"><svg class="ic"><use href="#ff"/></svg></b><i class="vs"></i>
        <b class="bt"><svg class="ic"><use href="#abc"/></svg></b>
      </div>
    </div>
  </div>

  <main class="work">
    <aside class="lefttrack">
      <div class="vbar">
        <i class="vgrip"></i>
        <b class="vb"><svg class="ic"><use href="#l1"/></svg></b><b class="vb"><svg class="ic"><use href="#l2"/></svg></b><b class="vb"><svg class="ic"><use href="#l3"/></svg></b><b class="vb"><svg class="ic"><use href="#l4"/></svg></b><b class="vb"><svg class="ic"><use href="#l5"/></svg></b><b class="vb"><svg class="ic"><use href="#l6"/></svg></b><b class="vb"><svg class="ic"><use href="#l7"/></svg></b><b class="vb"><svg class="ic"><use href="#l8"/></svg></b><b class="vb"><svg class="ic"><use href="#l9"/></svg></b><b class="vb"><svg class="ic"><use href="#l10"/></svg></b><b class="vb"><svg class="ic"><use href="#l11"/></svg></b><b class="vb"><svg class="ic"><use href="#l12"/></svg></b><b class="vb"><svg class="ic"><use href="#l13"/></svg></b><b class="vb"><svg class="ic"><use href="#l14"/></svg></b><b class="vb"><svg class="ic"><use href="#l15"/></svg></b><b class="vb"><svg class="ic"><use href="#l16"/></svg></b>
        <b class="vb vb-a">A</b>
      </div>
    </aside>

    <section class="center">
      <div class="canvas">
        <div class="viewlabel">[−][俯视][二维线框]</div>
        <div class="cross-h"></div><div class="cross-v"></div><div class="cross-s"></div>
        <svg class="ucs" viewBox="0 0 100 90">
          <path d="M20.500 23v49.500M20.500 72.500H71" stroke="#fff"/>
          <rect x="16.500" y="67.500" width="9" height="10" stroke="#fff" fill="none"/>
          <text x="23" y="19" class="ucs-t">Y</text><text x="75" y="71" class="ucs-t">X</text>
        </svg>
        <div class="cmd">
          <div class="cmd-dark">
            <i class="cmd-grip"></i>
            <span class="cmd-x">✕</span>
            <svg class="cmd-wr" viewBox="0 0 16 16"><path d="M2 1l3 3 1.500-.5L7 2 5 .5C8-.5 10 2 9 5l6 7.500-2 2.500L6 8C3 9 0 6 2 1z" fill="#e8e8e8"/></svg>
          </div>
          <div class="cmd-body">
            <svg class="cmd-pr" viewBox="0 0 16 16"><rect x="1" y="1" width="14" height="14" fill="#c8c8c8" stroke="#666"/><path d="M3 4l4 3-4 3M8 12h4" stroke="#222" stroke-width="1.200" fill="none"/></svg>
            <span class="caret"></span>
            <span class="cmd-ph">键入命令</span>
            <span class="tri-u"></span>
          </div>
        </div>
      </div>
      <div class="ltabs">
        <div class="lnav">
          <svg class="lnav-b" viewBox="0 0 12 14"><path d="M3 2v10M10 2v10L4 7z" stroke="#555" fill="#555"/></svg>
          <svg class="lnav-b" viewBox="0 0 12 14"><path d="M9 2v10L3 7z" fill="#555"/></svg>
          <svg class="lnav-b" viewBox="0 0 12 14"><path d="M3 2v10l6-5z" fill="#555"/></svg>
          <svg class="lnav-b" viewBox="0 0 12 14"><path d="M9 2v10M2 2v10l6-5z" stroke="#555" fill="#555"/></svg>
        </div>
        <span class="ltab ltab-on">模型</span><span class="ltab">布局1</span><span class="ltab">布局2</span>
      </div>
    </section>

    <aside class="right">
      <div class="pal-title"><i class="pal-grip"></i></div>
      <div class="pal">
        <div class="pal-name">BDMAP_房地一体</div>
        <div class="sec"><i class="box box-minus"></i><span>预处理</span></div>
        <div class="pgrid">
          <b class="pb"><svg class="ic"><use href="#p1"/></svg></b><b class="pb"><svg class="ic"><use href="#p2"/></svg></b><b class="pb"><svg class="ic"><use href="#p3"/></svg></b><b class="pb"><svg class="ic"><use href="#p4"/></svg></b><b class="pb"><svg class="ic"><use href="#p5"/></svg></b><b class="pb"><svg class="ic"><use href="#p6"/></svg></b><b class="pb"><svg class="ic"><use href="#p7"/></svg></b><b class="pb"><svg class="ic"><use href="#p8"/></svg></b>
        </div>
        <div class="sec"><i class="box box-minus"></i><span>外部数据处理</span></div>
        <div class="pgrid">
          <b class="pb"><svg class="ic"><use href="#s1"/></svg></b><b class="pb"><svg class="ic"><use href="#s2"/></svg></b><b class="pb"><svg class="ic"><use href="#s3"/></svg></b><b class="pb"><svg class="ic"><use href="#s4"/></svg></b><b class="pb"><svg class="ic"><use href="#e5"/></svg></b><b class="pb"><svg class="ic"><use href="#e6"/></svg></b>
        </div>
        <div class="sec"><i class="box box-minus"></i><span>绘图编辑</span></div>
        <div class="pgrid">
          <b class="pb"><svg class="ic"><use href="#tq"/></svg></b><b class="pb"><svg class="ic"><use href="#d22"/></svg></b><b class="pb"><svg class="ic"><use href="#tf"/></svg></b><b class="pb"><svg class="ic"><use href="#d24"/></svg></b><b class="pb"><svg class="ic"><use href="#tp"/></svg></b><b class="pb"><svg class="ic"><use href="#d26"/></svg></b><b class="pb"><svg class="ic"><use href="#tw"/></svg></b><b class="pb"><svg class="ic"><use href="#d28"/></svg></b><b class="pb"><svg class="ic"><use href="#d29"/></svg></b><b class="pb"><svg class="ic"><use href="#d30"/></svg></b><b class="pb"><svg class="ic"><use href="#d31"/></svg></b><b class="pb"><svg class="ic"><use href="#d32"/></svg></b>
        </div>
        <div class="sec"><i class="box box-minus"></i><span>属性编辑</span></div>
        <div class="pgrid">
          <b class="pb"><svg class="ic"><use href="#a1"/></svg></b><b class="pb"><svg class="ic"><use href="#a2"/></svg></b><b class="pb"><svg class="ic"><use href="#a3"/></svg></b><b class="pb"><svg class="ic"><use href="#a4"/></svg></b><b class="pb"><svg class="ic"><use href="#a5"/></svg></b><b class="pb"><svg class="ic"><use href="#a6"/></svg></b><b class="pb"><svg class="ic"><use href="#a7"/></svg></b><b class="pb"></b><b class="pb"></b><b class="pb"></b><b class="pb"></b><b class="pb"></b>
        </div>
        <div class="sec"><i class="box box-minus"></i><span>成果输出</span></div>
        <div class="pgrid">
          <b class="pb"><svg class="ic"><use href="#o1"/></svg></b><b class="pb pb-hover"><svg class="ic"><use href="#ord1"/></svg></b><b class="pb"><svg class="ic"><use href="#o3"/></svg></b><b class="pb"><svg class="ic"><use href="#o4"/></svg></b><b class="pb"><svg class="ic"><use href="#o5"/></svg></b><b class="pb"><svg class="ic"><use href="#o6"/></svg></b><b class="pb"><svg class="ic"><use href="#o7"/></svg></b><b class="pb"><svg class="ic"><use href="#o8"/></svg></b><b class="pb"><svg class="ic"><use href="#o9"/></svg></b><b class="pb"><svg class="ic"><use href="#o10"/></svg></b><b class="pb"><svg class="ic"><use href="#o11"/></svg></b>
        </div>
        <div class="sec"><i class="box box-plus"></i><span>其他工具</span></div>
      </div>
      <div class="pal-foot"></div>
    </aside>
  </main>

  <div class="status"><i class="sgrip"></i></div>

  <footer class="taskbar">
    <div class="tk-start"><svg class="tk-win" viewBox="0 0 16 16"><path d="M0 2.200L6.800 1.200v6.300H0zM7.600 1.100L16 0v7.500H7.600zM0 8.300h6.800v6.500L0 13.800zM7.600 8.300H16V16l-8.400-1.200z" fill="#fff"/></svg></div>
    <div class="tk-search">
      <svg class="tk-mag" viewBox="0 0 16 16"><circle cx="9.500" cy="6" r="5" fill="none" stroke="#222" stroke-width="1.100"/><path d="M6 10l-5 5.500" stroke="#222" stroke-width="1.200"/></svg>
      <span>在这里输入你要搜索的内容</span>
    </div>
    <div class="tk-it"><svg class="tk-ico" viewBox="0 0 16 16"><circle cx="8" cy="8" r="6.300" fill="none" stroke="#fff" stroke-width="1.700"/></svg></div>
    <div class="tk-it"><svg class="tk-ico" viewBox="0 0 16 16"><path d="M2 1.500h10M2 14.500h10M2 4.500h10v7H2z" fill="none" stroke="#fff" stroke-width="1.200"/><path d="M15 1v3M15 6v4M15 12v3" stroke="#fff" stroke-width="1.500"/></svg></div>
    <div class="tk-it tk-w2"><svg class="tk-rec" viewBox="0 0 24 24"><circle cx="12" cy="12" r="11" fill="#fff"/><circle cx="12" cy="12" r="9" fill="#222"/><circle cx="12" cy="12" r="6.500" fill="#e8121c"/></svg></div>
    <div class="tk-it tk-w2"><svg class="tk-rec" viewBox="0 0 24 24"><path d="M2 13C2 6 7 1 13 1c6 0 10 4 10 11v2H9c0 5 8 6 13 2v5c-7 4-20 3-20-8zM9 9.500h8c0-4-7-4-8 0z" fill="#0a78d4"/></svg></div>
    <div class="tk-it tk-cad"><svg class="tk-app" viewBox="0 0 24 24"><rect width="24" height="24" fill="#e05a5a"/><path d="M12 3L5 20h4l3-7 3 7h4z" fill="#8a0a0a"/></svg></div>
    <div class="tray">
      <span class="tr tr1"><svg class="tr-i" viewBox="0 0 12 12"><path d="M1 9l5-5 5 5"/></svg></span>
      <span class="tr tr2"><svg class="tr-i tr-net" viewBox="0 0 16 16"><path d="M1 1h14v10H1zM8 11v3M4 14.500h8M1 1h5v5H1z"/></svg></span>
      <span class="tr tr3"><svg class="tr-i tr-net" viewBox="0 0 16 16"><path d="M1 6h2l3-3v10l-3-3H1zM9 5c1 2 1 4 0 6M11 3c2 3 2 7 0 10M13 1c3 4 3 10 0 14"/></svg></span>
      <span class="tr tr4">中</span>
      <span class="tr tr5"><span class="pin">拼</span></span>
      <span class="clock"><span>14:09</span><span>2020-04-26</span></span>
      <span class="tr tr6"><svg class="tr-note" viewBox="0 0 24 24"><path d="M2 2h20v15H9l-4 4v-4H2z" fill="#fff"/><path d="M6 6h12M6 9.500h12M6 13h8" stroke="#222" stroke-width="1.400"/></svg><span class="badge">7</span></span>
    </div>
  </footer>

  <svg class="logo-a-bg" viewBox="0 0 41 40">
    <path d="M17 4L4 31c4-1 7-1 10-4l3-8 3 8c3 3 6 3 9 4z" fill="url(#gRed)"/>
    <path d="M32 19h7l-3.500 4z" fill="#d8d8d8"/>
  </svg>

  <div class="dropdown">
    <div class="mi"><svg class="ic"><use href="#m1"/></svg><span>要素分割</span></div>
    <div class="mi"><svg class="ic"><use href="#m2"/></svg><span>要素转换</span></div>
    <div class="mi"><i class="ic"></i><span>房屋附属合并到房屋</span></div>
    <div class="mi"><i class="ic"></i><span>宗地合并</span></div>
    <div class="mi"><i class="ic"></i><span>宗地删除</span></div>
    <hr class="ms">
    <div class="mi"><svg class="ic"><use href="#m3"/></svg><span>单边修改房屋边长</span></div>
    <div class="mi"><svg class="ic"><use href="#m4"/></svg><span>联动偏移修改房屋边长</span></div>
    <div class="mi"><i class="ic"></i><span>多距离平行偏移</span></div>
    <hr class="ms">
    <div class="mi"><svg class="ic"><use href="#fz"/></svg><span>查找宗地</span></div>
    <div class="mi"><svg class="ic"><use href="#fh"/></svg><span>查找房屋</span></div>
    <div class="mi"><svg class="ic"><use href="#ff"/></svg><span>查找附属</span></div>
    <hr class="ms">
    <div class="mi"><i class="ic"></i><span>定义新增宗地</span></div>
    <div class="mi"><i class="ic"></i><span>取消新增宗地</span></div>
    <div class="mi"><i class="ic"></i><span>筛选新增宗地</span></div>
    <div class="mi"><i class="ic"></i><span>新增宗地排序</span></div>
    <hr class="ms">
    <div class="mi"><svg class="ic"><use href="#m8"/></svg><span>标注单边边长</span></div>
    <div class="mi"><svg class="ic"><use href="#m9"/></svg><span>标注边长</span></div>
    <div class="mi"><svg class="ic"><use href="#m10"/></svg><span>打开边长注记</span></div>
    <div class="mi"><i class="ic"></i><span></span></div>
    <div class="mi"><i class="ic"></i><span>删除边长注记</span></div>
    <hr class="ms">
    <div class="mi"><svg class="ic"><use href="#m11"/></svg><span>移动宗地注记</span></div>
    <div class="mi"><svg class="ic"><use href="#m12"/></svg><span>移动文字注记</span></div>
    <div class="mi"><svg class="ic"><use href="#m13"/></svg><span>移动分层平面图注记</span></div>
    <hr class="ms">
    <div class="mi"><svg class="ic"><use href="#n1"/></svg><span>更新宗地注记</span></div>
    <div class="mi"><svg class="ic"><use href="#n2"/></svg><span>更新房屋注记</span></div>
    <div class="mi"><svg class="ic"><use href="#n3"/></svg><span>更新房屋附属注记</span></div>
    <div class="clickdot"></div>
  </div>
  <svg class="cursor" viewBox="0 0 20 30"><path d="M1 1v22l5-5 4 9 4-2-4-8h7z" fill="#fff" stroke="#222"/></svg>
</div>
</body>
</html>
```
FILE: styles.css
```css
* { box-sizing: border-box; margin: 0; padding: 0; }
html, body { width: 1920px; height: 1080px; overflow: hidden; background: #666; }
body { font: 12px/1.2 "Noto Sans CJK SC", "Noto Sans", sans-serif; color: #111; }
b, i { font-weight: normal; font-style: normal; }

.defs { position: absolute; width: 0; height: 0; }
.app { position: relative; width: 1920px; height: 1080px; display: flex; flex-direction: column; }

/* shared icon look */
.ic { width: 16px; height: 16px; flex: none; display: block; fill: none; stroke: #333; stroke-width: 1; overflow: visible; }
.h { fill: #fff; stroke: #333; stroke-width: 1; }
.it { font: bold 7px "Liberation Sans", sans-serif; fill: #222; stroke: none; }
.it-a { font: 16px "Liberation Serif", serif; fill: #222; }
.it-b { font: bold 13px "Liberation Mono", monospace; fill: #111; }
.it-r { fill: #c01010; }
.it-c { font: 10px "Liberation Sans", sans-serif; fill: #333; }
.it-s { font: bold 4.500px "Liberation Sans", sans-serif; }
.it-l { font: 13px "Liberation Sans", sans-serif; fill: #222; }
.it-xy { font: 14px "Liberation Sans", sans-serif; fill: #1a2a5a; }
.it-shp { font: 8px "Liberation Sans", sans-serif; fill: #111; }
.it-red { font: 15px "Noto Sans CJK SC", sans-serif; fill: #d01818; }
.it-w { font: bold 5px "Liberation Sans", sans-serif; fill: #fff; }
.it-a4 { font: 9px "Liberation Sans", sans-serif; fill: #d01818; }
.it-word { font: italic bold 12px "Liberation Serif", serif; fill: #1f4f9a; }
.it-q { font: bold 12px "Liberation Sans", sans-serif; fill: #2f5fb0; }

.caret { display: block; width: 0; height: 0; flex: none; border: 3px solid transparent; border-top: 3px solid #333; border-bottom: 0; }
.caret-off { border-top-color: #aaa; }

/* title bar */
.title { height: 24px; flex: none; display: flex; align-items: center; background: #fff; }
.logo-slot { width: 41px; }
.qat { width: 21px; height: 24px; background: linear-gradient(#a8a8a8, #6e6e6e); border-right: 1px solid #555; display: flex; align-items: center; justify-content: center; }
.qat-glyph { width: 7px; height: 6px; border-top: 1px solid #111; position: relative; }
.qat-glyph::after { content: ""; display: block; margin: 1px 0 0 0; border: 3.500px solid transparent; border-top: 4px solid #111; border-bottom: 0; }
.title-text { margin-left: 401px; color: #111; white-space: nowrap; }
.title-doc { margin-left: 16px; font: 12.500px "Open Sans", sans-serif; color: #222; }
.info { margin-left: auto; width: 444px; height: 24px; display: flex; align-items: center; background: linear-gradient(#a6a6a6, #828282 50%, #6e6e6e); border: 1px solid #555; border-top: 0; padding-left: 4px; }
.tri-r { width: 0; height: 0; border: 4px solid transparent; border-left: 5px solid #111; border-right: 0; margin-right: 5px; }
.info-input { width: 178px; height: 20px; background: #fbfbfb; color: #777; font-style: italic; padding: 3px 0 0 3px; line-height: 14px; }
.ic-bin { margin: 0 4px 0 5px; }
.ic-user { margin-left: 3px; width: 18px; height: 18px; }
.info-login { color: #fff; margin-left: 3px; }
.caret-login { margin: 0 6px 0 58px; }
.ic-x { margin-left: 5px; width: 16px; height: 16px; }
.ic-tri { margin: 0 4px 0 8px; }
.info-sep { width: 1px; height: 18px; background: #7a7a7a; margin: 0 13px 0 6px; }
.ic-help { margin-right: 4px; }
.winbtns { width: 163px; padding-left: 24px; display: flex; height: 24px; }
.win { width: 46px; display: flex; align-items: center; justify-content: center; }
.ic-win { width: 11px; height: 11px; fill: none; stroke: #888; stroke-width: 1; }

/* menu bar */
.menubar { height: 21px; flex: none; border-top: 1px solid #333; display: grid; grid-template-columns: 55px 62px 63px 64px 64px 90px 87px 67px 69px 67px 82px 62px 66px 1fr; align-items: center; background: linear-gradient(#4b4b4b, #777 55%, #4a4a4a); color: #f2f2f2; position: relative; }
.menubar::before { content: ""; height: 1px; }
.mb { line-height: 20px; white-space: nowrap; }
.mb-on { width: 62px; height: 20px; background: linear-gradient(#3f3f3f, #555); border: 1px solid #1f1f1f; line-height: 18px; padding-left: 5px; }
.mdi { position: absolute; right: 5px; top: 2px; display: flex; align-items: center; gap: 7px; }
.mdi-min { width: 10px; height: 3px; background: #222; margin-top: 8px; }
.mdi-res { width: 11px; height: 12px; fill: none; stroke: #111; stroke-width: 1.400; }
.mdi-x { font: bold 12px "Liberation Sans", sans-serif; color: #111; }

/* document tabs */
.tabbar { height: 27px; flex: none; display: flex; align-items: flex-end; padding-left: 21px; background: linear-gradient(#a0a0a0, #8c8c8c); border-bottom: 1px solid #c0c0c0; }
.dtab { width: 125px; height: 22px; display: flex; align-items: center; padding: 0 13px 0 11px; background: linear-gradient(#b4b4b4, #929292); clip-path: polygon(0 100%, 6px 0, 116px 0, 125px 100%); font: 12px "DejaVu Sans", sans-serif; color: #111; justify-content: space-between; }
.dtab-x { color: #8a8a8a; font: bold 10px "DejaVu Sans", sans-serif; }
.dplus { width: 22px; height: 16px; margin: 0 0 3px 6px; background: #7e7e7e; border: 1px solid #666; border-radius: 4px 8px 2px 6px; display: flex; align-items: center; justify-content: center; color: #ccc; font: bold 12px "Liberation Sans", sans-serif; }

/* toolbars */
.toolbars { height: 87px; flex: none; background: #666; padding-top: 5px; display: flex; flex-direction: column; }
.row { display: flex; flex: none; }
.row1 { height: 22px; }
.row2 { height: 23px; margin-top: 4px; }
.row3 { height: 22px; margin-top: 5px; }
.tb { display: flex; align-items: center; height: 100%; background: #f1f1f1; box-shadow: 0 0 0 1px #484848; }
.tb-m1 { margin-left: 1px; background: #d4d4d4; }
.tb-m2 { margin-left: 2px; }
.tb-m3 { margin-left: 3px; }
.grip { width: 8px; height: 100%; flex: none; background: linear-gradient(#2a2a2a 50%, transparent 50%) 3px 1px / 2px 2px repeat-y, #5f5f5f; }
.bt { width: 23px; height: 100%; flex: none; display: flex; align-items: center; justify-content: center; }
.bt-drop { height: 100%; flex: none; display: flex; align-items: center; justify-content: center; }
.bt-d1 { width: 14px; }
.bt-d2 { width: 12px; }
.vs { width: 6px; height: 18px; flex: none; background: linear-gradient(#555, #555) center / 1px 100% no-repeat; }
.hid-r1 { width: 207px; }
.hid-r3 { width: 211px; }
.hid { height: 100%; flex: none; }
.combo { height: 100%; display: flex; align-items: center; background: #e1e1e1; border: 1px solid #bdbdbd; border-radius: 2px; flex: none; position: relative; }
.combo-layer { width: 298px; margin: 0 1px 0 2px; padding-left: 1px; }
.ic-lb { margin-right: 1px; }
.swatch { width: 10px; height: 10px; background: #fff; border: 1px solid #111; flex: none; margin: 0 3px 0 1px; }
.combo-mono { font: 12px "Liberation Mono", monospace; letter-spacing: -1.200px; color: #222; }
.combo-layer .combo-mono { margin-left: 2px; }
.chev { position: absolute; right: 2px; top: 8px; width: 10px; height: 6px; fill: none; stroke: #666; stroke-width: 1.200; }
.combo-c1 { width: 149px; margin-left: 1px; padding-left: 4px; }
.cs { width: 8px; height: 100%; flex: none; background: linear-gradient(#555, #555) 3px 0 / 1px 100% no-repeat; }
.combo-c2 { width: 289px; }
.combo-right { position: absolute; right: 38px; }
.combo-c3 { width: 119px; background: #c8c8c8; border-color: #c8c8c8; padding-left: 9px; }
.combo-c3 .combo-mono { color: #8a8a8a; }
.combo-c3 .chev { stroke: #aaa; }
.combo-c4 { width: 120px; margin-left: 1px; }
.combo-c5 { width: 120px; margin-left: 5px; }
.combo-sans { font: 13.500px "Liberation Sans", sans-serif; color: #222; }
.combo-bd { margin-left: 18px; }
.combo-iso { margin-left: 18px; }

/* work area */
.work { height: 859px; flex: none; display: flex; background: #666; }
.lefttrack { width: 31px; flex: none; border-right: 2px solid #8a8a8a; padding-left: 1px; }
.vbar { width: 25px; height: 381px; background: #ededed; box-shadow: 0 0 0 1px #444; display: flex; flex-direction: column; }
.vgrip { height: 7px; flex: none; background: linear-gradient(90deg, #2a2a2a 50%, transparent 50%) 0 2px / 2px 3px repeat-x, #5f5f5f; }
.vb { height: 22px; flex: none; display: flex; align-items: center; justify-content: center; padding-right: 2px; }
.vb-a { font: 21px "Liberation Sans", sans-serif; color: #333; }

.center { width: 1703px; flex: none; display: flex; flex-direction: column; }
.canvas { height: 842px; flex: none; background: #1f2630; border-top: 1px solid #a8a8a8; position: relative; }
.viewlabel { position: absolute; left: 4px; top: 5px; color: #dcdcdc; font-size: 12px; line-height: 16px; }
.cross-h { position: absolute; left: 887px; top: 0; width: 96px; height: 1px; background: #fff; }
.cross-v { position: absolute; left: 935px; top: 0; width: 1px; height: 49px; background: #fff; }
.cross-s { position: absolute; left: 932px; top: 0; width: 7px; height: 4px; border: 1px solid #fff; }
.ucs { position: absolute; left: 0; top: 748px; width: 100px; height: 90px; fill: none; stroke-width: 1; }
.ucs-t { font: 18px "Liberation Sans", sans-serif; fill: #fff; stroke: none; }
.cmd { position: absolute; left: 373px; top: 813px; width: 957px; height: 27px; display: flex; border-radius: 2px; overflow: hidden; }
.cmd-dark { width: 54px; flex: none; background: linear-gradient(#5c5c5c, #3c3c3c); display: flex; align-items: center; }
.cmd-grip { width: 5px; height: 21px; margin-left: 4px; background-image: linear-gradient(#9a9a9a 50%, transparent 50%); background-size: 100% 3px; }
.cmd-x { color: #ddd; font: bold 12px "DejaVu Sans", sans-serif; margin-left: 7px; }
.cmd-wr { width: 15px; height: 16px; margin-left: 5px; }
.cmd-body { flex: 1; background: #c0c0c0; display: flex; align-items: center; padding-left: 5px; position: relative; }
.cmd-pr { width: 15px; height: 15px; margin-right: 3px; }
.cmd-ph { margin-left: 9px; color: #777; font-style: italic; }
.tri-u { position: absolute; right: 5px; top: 11px; width: 0; height: 0; border: 3.500px solid transparent; border-bottom: 4px solid #111; border-top: 0; }
.ltabs { height: 17px; flex: none; background: #f0f0f0; display: flex; align-items: flex-start; border-top: 1px solid #555; }
.lnav { display: flex; width: 56px; flex: none; }
.lnav-b { width: 14px; height: 16px; border-right: 1px solid #bbb; border-left: 1px solid #ddd; background: #e8e8e8; }
.ltab { position: relative; height: 16px; display: flex; align-items: center; justify-content: center; width: 46px; flex: none; color: #111; line-height: 14px; padding-bottom: 1px; }
.ltab::after { content: ""; position: absolute; right: 2px; top: 1px; height: 14px; border-right: 1px solid #333; transform: skewX(-20deg); }
.ltab-on { width: 40px; color: #fff; background: #1f1f1f; clip-path: polygon(0 0, 100% 0, 84% 100%, 12% 100%); margin-left: 2px; }
.ltab-on::after { display: none; }

.right { width: 186px; flex: none; border-left: 2px solid #dcdcdc; padding: 1px 0 0 4px; display: flex; flex-direction: column; }
.pal-title { height: 24px; flex: none; margin-right: 2px; background: #9a9a9a; border-bottom: 2px solid #efefef; border-radius: 4px 4px 0 0; position: relative; }
.pal-grip { position: absolute; left: 3px; top: 4px; width: 3px; height: 12px; background-image: linear-gradient(#222 50%, transparent 50%); background-size: 100% 2px; }
.pal { margin: 4px 4px 0 4px; flex: none; height: 822px; background: #efefef; }
.pal-name { height: 21px; background: #c0cedc; padding-left: 4px; line-height: 21px; color: #111; margin-bottom: 3px; }
.sec { height: 20px; margin: 0 2px; background: #9c9c9c; color: #fff; display: flex; align-items: center; padding-left: 6px; gap: 7px; }
.box { width: 9px; height: 9px; flex: none; background-color: #fff; border: 1px solid #111; position: relative; }
.box::before { content: ""; position: absolute; left: 1px; right: 1px; top: 3px; height: 1px; background: #111; }
.box-plus::after { content: ""; position: absolute; top: 1px; bottom: 1px; left: 3px; width: 1px; background: #111; }
.pgrid { display: grid; grid-template-columns: repeat(6, 28px); grid-auto-rows: 28px; padding: 5px 0 4px 1px; }
.pb { display: flex; align-items: center; justify-content: center; }
.pb-hover { background: #f8f8f8; border: 1px solid #dcdcdc; }
.pal-foot { height: 2px; margin-top: 3px; background: #efefef; }

/* status */
.status { height: 22px; flex: none; background: linear-gradient(#6c6c6c, #8e8e8e 50%, #6f6f6f); border-top: 1px solid #000; position: relative; }
.sgrip { position: absolute; right: 0; bottom: 0; width: 12px; height: 12px; background-image: radial-gradient(circle, #e0e0e0 40%, transparent 45%); background-size: 3px 3px; clip-path: polygon(100% 0, 100% 100%, 0 100%); }

/* taskbar */
.taskbar { height: 40px; flex: none; background: #1a1a1a; display: flex; align-items: stretch; }
.tk-start { width: 48px; display: flex; align-items: center; justify-content: center; }
.tk-win { width: 16px; height: 16px; }
.tk-search { width: 344px; height: 38px; background: #f0f0f0; display: flex; align-items: center; padding-left: 12px; font-size: 14px; color: #333; gap: 11px; }
.tk-mag { width: 16px; height: 17px; }
.tk-it { width: 48px; display: flex; align-items: center; justify-content: center; }
.tk-w2 { width: 50px; }
.tk-ico { width: 16px; height: 16px; }
.tk-rec { width: 24px; height: 24px; }
.tk-cad { background: #4a4a4a; border-bottom: 2px solid #76b9ed; }
.tk-app { width: 24px; height: 24px; margin-bottom: 2px; }
.tray { margin-left: auto; display: flex; align-items: center; height: 100%; padding-right: 12px; color: #fff; }
.tr { display: flex; align-items: center; justify-content: center; flex: none; }
.tr1 { width: 25px; }
.tr2, .tr3 { width: 24px; }
.tr4 { width: 23px; font-size: 15px; }
.tr5 { width: 34px; }
.tr6 { width: 42px; position: relative; }
.tr-i { width: 12px; height: 12px; fill: none; stroke: #eee; stroke-width: 1.100; }
.tr-net { width: 16px; height: 16px; }
.pin { background: #fff; color: #111; font-size: 12px; line-height: 14px; padding: 0 1px; }
.clock { width: 80px; display: flex; flex-direction: column; align-items: center; gap: 3px; font: 12px/16px "Noto Sans", sans-serif; color: #f2f2f2; }
.tr-note { width: 18px; height: 18px; }
.badge { position: absolute; left: 23px; top: 5px; width: 15px; height: 15px; border-radius: 50%; background: #333; border: 1px solid #bbb; color: #eee; font: bold 11px/13px "Liberation Sans", sans-serif; text-align: center; }

/* overlays */
.logo-a-bg { position: absolute; left: 0; top: 0; width: 41px; height: 41px; background: linear-gradient(#7e7e7e, #4e4e4e); border: 1px solid #2a2a2a; }
.dropdown { position: absolute; left: 553px; top: 45px; width: 209px; padding: 2.500px 0; background: #f0f0f0; box-shadow: 0 0 0 1px #9a9a9a; }
.mi { height: 22px; display: flex; align-items: center; padding-left: 5px; color: #111; }
.mi .ic { margin-right: 13px; }
.ms { height: 1px; border: 0; background: #d2d2d2; margin: 3px 3px 3px 30px; }
.clickdot { position: absolute; left: 33px; top: 466px; width: 59px; height: 59px; border-radius: 50%; background: #e0000c; mix-blend-mode: multiply; }
.cursor { position: absolute; left: 616px; top: 541px; width: 19px; height: 28px; }
```
